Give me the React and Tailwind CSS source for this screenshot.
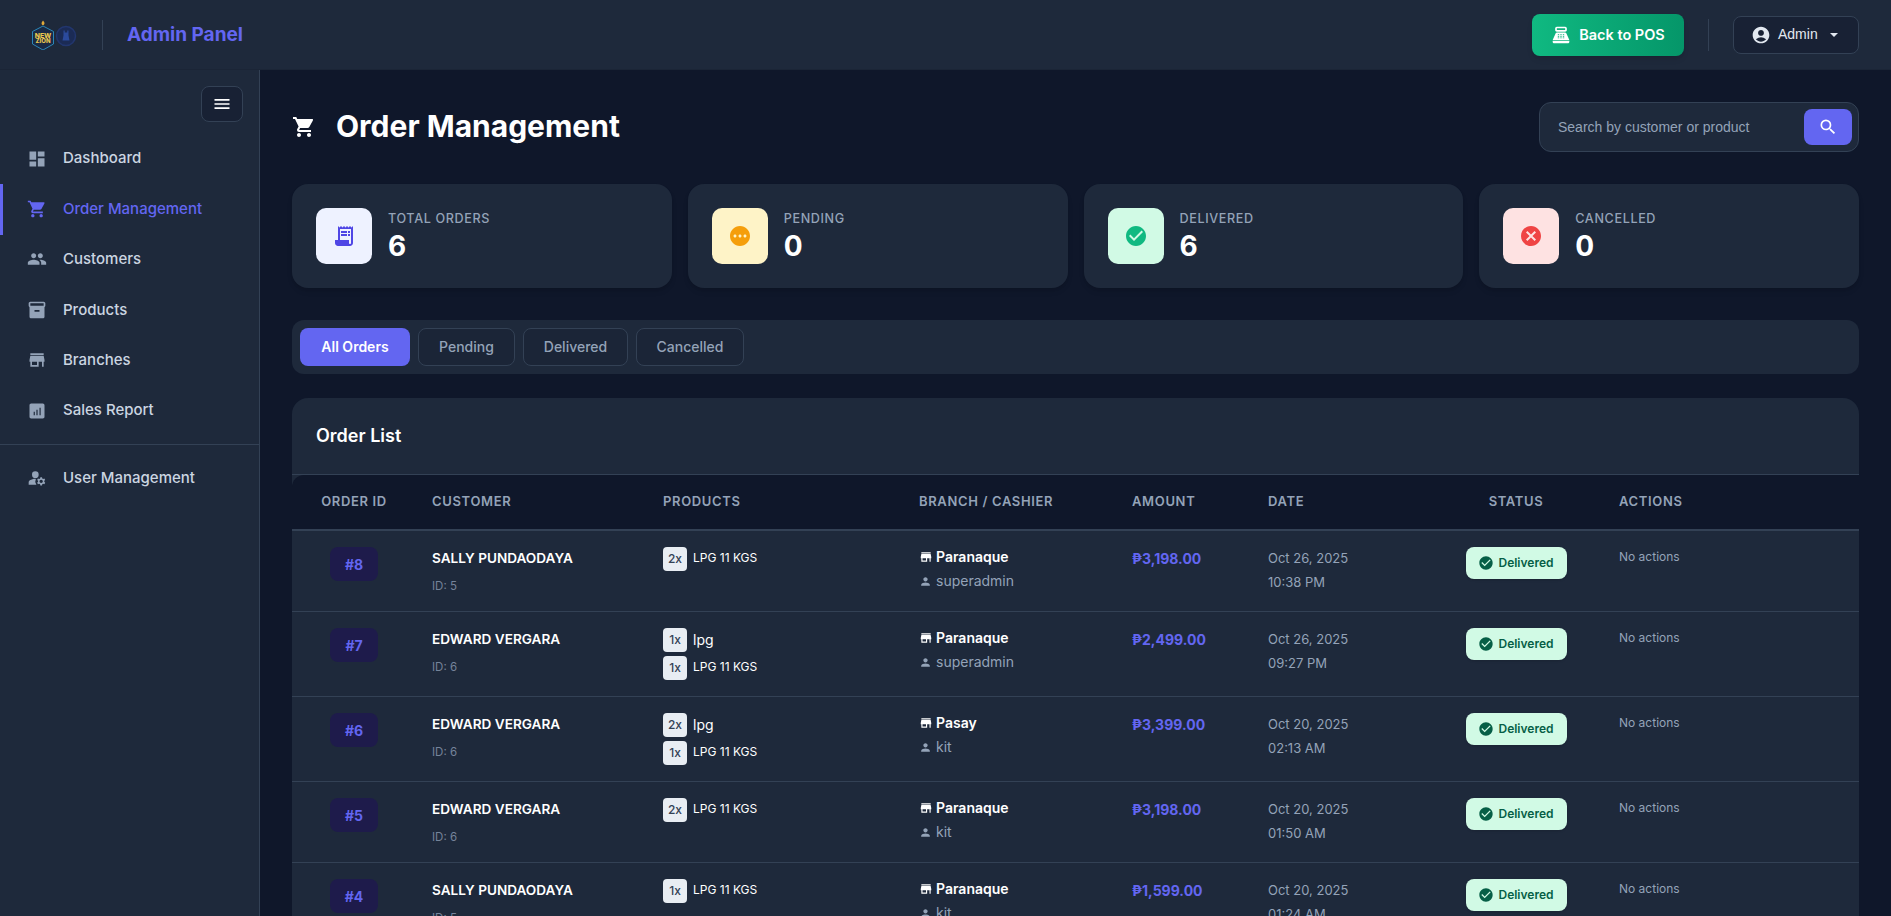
import React from 'react';
import {
  MdDashboard,
  MdShoppingCart,
  MdPeople,
  MdInventory2,
  MdStore,
  MdManageAccounts,
  MdMenu,
  MdSearch,
  MdAccountCircle,
  MdPointOfSale,
  MdReceiptLong,
  MdPending,
  MdCheckCircle,
  MdCancel,
  MdPerson,
} from 'react-icons/md';

function ReportIcon({ className }) {
  return (
    <svg viewBox="0 0 24 24" width="1em" height="1em" fill="currentColor" className={className}>
      <path
        fillRule="evenodd"
        d="M5 3h14c1.1 0 2 .9 2 2v14c0 1.1-.9 2-2 2H5c-1.1 0-2-.9-2-2V5c0-1.1.9-2 2-2zm3 10v4h1.4v-4H8zm3.3-2.5V17h1.4v-6.5h-1.4zM15 8v9h1.4V8H15z"
      />
    </svg>
  );
}

const navItems = [
  { label: 'Dashboard', icon: MdDashboard },
  { label: 'Order Management', icon: MdShoppingCart, active: true },
  { label: 'Customers', icon: MdPeople },
  { label: 'Products', icon: MdInventory2 },
  { label: 'Branches', icon: MdStore },
  { label: 'Sales Report', icon: ReportIcon },
];

const stats = [
  { label: 'Total Orders', value: 6, icon: MdReceiptLong, box: 'bg-[#eef2ff]', color: 'text-[#4f46e5]' },
  { label: 'Pending', value: 0, icon: MdPending, box: 'bg-[#fef3c7]', color: 'text-[#f59e0b]' },
  { label: 'Delivered', value: 6, icon: MdCheckCircle, box: 'bg-[#d1fae5]', color: 'text-[#10b981]' },
  { label: 'Cancelled', value: 0, icon: MdCancel, box: 'bg-[#fee2e2]', color: 'text-[#ef4444]' },
];

const orders = [
  { id: 8, customer: 'Sally Pundaodaya', customerId: 5, items: [['2x', 'LPG 11 KGS']], branch: 'Paranaque', cashier: 'superadmin', amount: '₱3,198.00', date: 'Oct 26, 2025', time: '10:38 PM' },
  { id: 7, customer: 'Edward Vergara', customerId: 6, items: [['1x', 'lpg'], ['1x', 'LPG 11 KGS']], branch: 'Paranaque', cashier: 'superadmin', amount: '₱2,499.00', date: 'Oct 26, 2025', time: '09:27 PM' },
  { id: 6, customer: 'Edward Vergara', customerId: 6, items: [['2x', 'lpg'], ['1x', 'LPG 11 KGS']], branch: 'Pasay', cashier: 'kit', amount: '₱3,399.00', date: 'Oct 20, 2025', time: '02:13 AM' },
  { id: 5, customer: 'Edward Vergara', customerId: 6, items: [['2x', 'LPG 11 KGS']], branch: 'Paranaque', cashier: 'kit', amount: '₱3,198.00', date: 'Oct 20, 2025', time: '01:50 AM' },
  { id: 4, customer: 'Sally Pundaodaya', customerId: 5, items: [['1x', 'LPG 11 KGS']], branch: 'Paranaque', cashier: 'kit', amount: '₱1,599.00', date: 'Oct 20, 2025', time: '01:24 AM' },
];

function Logo() {
  return (
    <svg width="46" height="30" viewBox="0 0 46 30" className="shrink-0">
      <path d="M11 0.5c1.6 1.8 2 3 .9 4.2-.6.6-1.4.6-1.9 0-1-1.2-.3-2.6 1-4.2z" fill="#e0a93a" />
      <path d="M11 6 21.5 11.5V24L11 30 .5 24V11.5z" fill="#1a2a45" stroke="#2a86b8" strokeWidth="1" />
      <text x="11" y="17.5" textAnchor="middle" fontSize="6.8" fontWeight="800" fill="#e9c64f" fontFamily="Inter, sans-serif">NEW</text>
      <text x="11" y="22.8" textAnchor="middle" fontSize="6" fontWeight="800" fill="#e9c64f" fontFamily="Inter, sans-serif">ZION</text>
      <circle cx="34" cy="16" r="9.5" fill="#1b2b55" stroke="#22366e" strokeWidth="1.5" />
      <path d="M31.5 10.5h1.2v2h2.6v-2h1.2v5l1 5h-7l1-5z" fill="#2b4a9c" />
    </svg>
  );
}

function Header() {
  return (
    <header className="h-[70px] shrink-0 flex items-center justify-between pl-8 pr-8 bg-[#1e293b] border-b border-[#1b2536]">
      <div className="flex items-center">
        <Logo />
        <div className="w-px h-[30px] bg-[#334155] ml-6 mr-[24px]" />
        <span className="pt-px text-[19px] font-bold text-[#6366f1]">Admin Panel</span>
      </div>
      <div className="flex items-center">
        <button className="h-[42px] w-[152px] flex items-center justify-center gap-2 rounded-lg bg-gradient-to-r from-[#10b981] to-[#059669] text-white text-[14.5px] font-semibold shadow-md">
          <MdPointOfSale className="text-[20px]" />
          Back to POS
        </button>
        <div className="w-px h-8 bg-[#334155] mx-6" />
        <button className="h-[38px] w-[126px] flex items-center pl-[18px] rounded-lg bg-[#0f172a]/40 border border-[#334155] text-[#e2e8f0] text-[14px] font-['Liberation_Sans',sans-serif]">
          <MdAccountCircle className="text-[20px] mr-[7px] -ml-px" />
          Admin
          <span className="ml-3 w-0 h-0 border-x-4 border-x-transparent border-t-4 border-t-[#e2e8f0]" />
        </button>
      </div>
    </header>
  );
}

function Sidebar() {
  return (
    <aside className="w-[260px] shrink-0 bg-[#1e293b] border-r border-[#334155] pt-4">
      <div className="flex justify-end pr-4">
        <button className="w-[42px] h-9 flex items-center justify-center rounded-lg bg-[#0f172a]/40 border border-[#334155] text-white">
          <MdMenu className="text-[20px]" />
        </button>
      </div>
      <nav className="mt-3">
        {navItems.map((item) => (
          <a
            key={item.label}
            className={`h-[50.4px] flex items-center gap-4 pl-6 pb-px border-l-[3px] text-[15px] font-medium ${item.active ? 'border-[#6366f1] text-[#6366f1]' : 'border-transparent text-[#cbd5e1]'}`}
          >
            <item.icon className={`text-[20px] ${item.active ? 'text-[#6366f1]' : 'text-[#94a3b8]'}`} />
            {item.label}
          </a>
        ))}
      </nav>
      <div className="h-px bg-[#334155] mt-2 mb-2" />
      <a className="h-[50.4px] flex items-center gap-4 pl-6 pb-px border-l-[3px] border-transparent text-[15px] font-medium text-[#cbd5e1]">
        <MdManageAccounts className="text-[20px] text-[#94a3b8]" />
        User Management
      </a>
    </aside>
  );
}

function OrderRow({ order }) {
  return (
    <tr className="border-b border-[#334155] bg-[#1e293b] align-top">
      <td className="py-4 text-center">
        <span className="inline-flex w-12 h-[34px] items-center justify-center rounded-lg bg-[#1e1b4b] text-[#6366f1] text-[14px] font-bold">
          #{order.id}
        </span>
      </td>
      <td className="pt-[15px] pb-4 pl-4">
        <div className="text-white text-[13.6px] font-semibold leading-6 uppercase">{order.customer}</div>
        <div className="mt-[7px] text-[#75839a] text-[11.5px] leading-[18px]">ID: {order.customerId}</div>
      </td>
      <td className="py-4 pl-4">
        <div className="flex flex-col gap-1">
          {order.items.map(([qty, name], i) => (
            <div key={i} className="flex items-center gap-[6px]">
              <span className="w-6 h-6 flex items-center justify-center rounded bg-[#e8edf3] text-[#334155] text-[12px] font-medium">{qty}</span>
              <span className={`pb-[2px] text-white ${name === 'lpg' ? 'text-[14px]' : 'text-[12px]'}`}>{name}</span>
            </div>
          ))}
        </div>
      </td>
      <td className="pt-[15px] pb-4 pl-4">
        <div className="flex items-center gap-[3px] text-white text-[14px] font-semibold leading-[22px]">
          <MdStore className="text-[14px]" />
          {order.branch}
        </div>
        <div className="mt-[2px] flex items-center gap-1 text-[#94a3b8] text-[14px] leading-[22px]">
          <MdPerson className="text-[13px]" />
          {order.cashier}
        </div>
      </td>
      <td className="py-4 pl-4 text-[#6366f1] text-[14px] font-bold leading-6">{order.amount}</td>
      <td className="pt-[15px] pb-4 pl-4 text-[#94a3b8] text-[13px] leading-6">
        <div>{order.date}</div>
        <div>{order.time}</div>
      </td>
      <td className="py-4 text-center">
        <span className="inline-flex h-8 w-[101px] items-center justify-center gap-1 rounded-lg bg-[#d1fae5] text-[#065f46] text-[12px] font-semibold shadow-sm">
          <MdCheckCircle className="text-[16px]" />
          Delivered
        </span>
      </td>
      <td className="pt-[15px] pb-4 pl-4 text-[#94a3b8] text-[12px] leading-[22px]">No actions</td>
    </tr>
  );
}

export default function App() {
  return (
    <div className="h-screen overflow-hidden flex flex-col bg-[#0f172a] font-['Inter',sans-serif]">
      <Header />
      <div className="flex flex-1 min-h-0">
        <Sidebar />
        <main className="flex-1 min-w-0 overflow-hidden px-8 pt-8">
          <div className="flex items-center justify-between mb-8">
            <div className="flex items-center gap-5">
              <MdShoppingCart className="text-[24px] text-white" />
              <h1 className="text-[30px] font-bold text-white pb-[2px]">Order Management</h1>
            </div>
            <div className="w-80 h-[50px] flex items-center justify-between pl-[18px] pr-[6px] rounded-xl bg-[#1e293b] border border-[#334155]">
              <span className="text-[14px] text-[#94a3b8] font-['Liberation_Sans',sans-serif]">Search by customer or product</span>
              <button className="w-12 h-9 flex items-center justify-center rounded-lg bg-[#6366f1] text-white">
                <MdSearch className="text-[20px]" />
              </button>
            </div>
          </div>

          <div className="grid grid-cols-4 gap-4 mb-8">
            {stats.map((s) => (
              <div key={s.label} className="h-[104px] flex items-center gap-4 px-6 rounded-2xl bg-[#1e293b] shadow-md">
                <div className={`w-14 h-14 flex items-center justify-center rounded-[10px] ${s.box}`}>
                  <s.icon className={`text-[24px] ${s.color}`} />
                </div>
                <div>
                  <div className="text-[12.6px] font-medium uppercase tracking-[0.05em] text-[#94a3b8] leading-5">{s.label}</div>
                  <div className="text-[28px] font-bold text-white leading-[34px]">{s.value}</div>
                </div>
              </div>
            ))}
          </div>

          <div className="h-[54px] flex items-center gap-2 px-2 rounded-xl bg-[#1e293b] mb-6">
            <button className="h-[38px] w-[110px] pb-px rounded-lg bg-[#6366f1] text-white text-[14px] font-semibold">All Orders</button>
            <button className="h-[38px] w-[97px] pb-px rounded-lg bg-[#0f172a]/20 border border-[#334155] text-[#94a3b8] text-[14px] font-medium">Pending</button>
            <button className="h-[38px] w-[105px] pb-px rounded-lg bg-[#0f172a]/20 border border-[#334155] text-[#94a3b8] text-[14px] font-medium">Delivered</button>
            <button className="h-[38px] w-[108px] pb-px rounded-lg bg-[#0f172a]/20 border border-[#334155] text-[#94a3b8] text-[14px] font-medium">Cancelled</button>
          </div>

          <section className="rounded-t-2xl bg-[#1e293b] overflow-hidden">
            <div className="h-[77px] flex items-center px-6 pb-[2px] border-b border-[#334155]">
              <h2 className="text-[18px] font-semibold text-white">Order List</h2>
            </div>
            <div className="rounded-tl-xl overflow-hidden">
              <table className="w-full table-fixed border-collapse">
                <colgroup>
                  <col className="w-[124px]" />
                  <col className="w-[231px]" />
                  <col className="w-[256px]" />
                  <col className="w-[213px]" />
                  <col className="w-[136px]" />
                  <col className="w-[177px]" />
                  <col className="w-[174px]" />
                  <col />
                </colgroup>
                <thead>
                  <tr className="h-[55px] bg-[#0f172a] border-b-2 border-[#334155] text-[13px] font-semibold uppercase tracking-[0.05em] text-[#94a3b8]">
                    <th className="font-semibold text-center">Order ID</th>
                    <th className="font-semibold text-left pl-4">Customer</th>
                    <th className="font-semibold text-left pl-4">Products</th>
                    <th className="font-semibold text-left pl-4">Branch / Cashier</th>
                    <th className="font-semibold text-left pl-4">Amount</th>
                    <th className="font-semibold text-left pl-4">Date</th>
                    <th className="font-semibold text-center">Status</th>
                    <th className="font-semibold text-left pl-4">Actions</th>
                  </tr>
                </thead>
                <tbody>
                  {orders.map((order) => (
                    <OrderRow key={order.id} order={order} />
                  ))}
                </tbody>
              </table>
            </div>
          </section>
        </main>
      </div>
    </div>
  );
}
